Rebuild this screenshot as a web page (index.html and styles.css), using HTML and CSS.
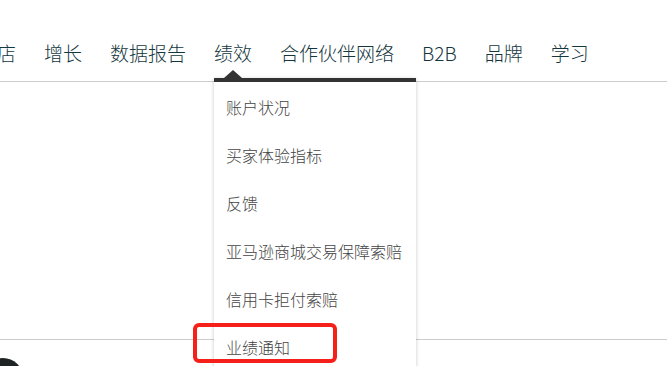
FILE: index.html
```html
<!DOCTYPE html>
<html lang="zh-CN">
<head>
<meta charset="utf-8">
<link rel="stylesheet" href="styles.css">
</head>
<body>
<div class="page">
  <header class="nav">
    <ul class="nav-list">
      <li>店</li>
      <li>增长</li>
      <li>数据报告</li>
      <li class="active">绩效</li>
      <li>合作伙伴网络</li>
      <li>B2B</li>
      <li>品牌</li>
      <li>学习</li>
    </ul>
  </header>
  <section class="content"></section>
  <div class="footer-row"><span class="avatar"></span></div>

  <div class="dropdown">
    <span class="caret"></span>
    <ul class="menu">
      <li>账户状况</li>
      <li>买家体验指标</li>
      <li>反馈</li>
      <li>亚马逊商城交易保障索赔</li>
      <li>信用卡拒付索赔</li>
      <li>业绩通知</li>
    </ul>
  </div>
  <div class="highlight"></div>
</div>
</body>
</html>
```
FILE: styles.css
```css
html, body {
  margin: 0;
  padding: 0;
  background: #fff;
  overflow: hidden;
}
body {
  font-family: "Noto Sans CJK SC", "Noto Sans", sans-serif;
}
.page {
  position: relative;
  width: 667px;
  height: 366px;
  overflow: hidden;
}
.nav {
  height: 81px;
  border-bottom: 1px solid #cccccc;
  box-sizing: content-box;
}
.nav-list {
  list-style: none;
  margin: 0 0 0 -3px;
  padding: 39px 0 0 0;
  display: flex;
  gap: 28px;
  white-space: nowrap;
}
.nav-list li {
  font-size: 19px;
  line-height: 28px;
  font-weight: 300;
  color: #14363e;
}
.content {
  height: 257px;
  border-bottom: 1px solid #cccccc;
}
.footer-row {
  height: 26px;
  position: relative;
}
.avatar {
  position: absolute;
  left: -17px;
  top: 18px;
  width: 40px;
  height: 40px;
  border-radius: 50%;
  background: #1e2323;
}
.dropdown {
  position: absolute;
  left: 214px;
  top: 78px;
  width: 202px;
  height: 320px;
  background: #fff;
  border-top: 4px solid #333333;
  box-shadow: 0 1px 4px rgba(0, 0, 0, 0.22);
}
.caret {
  position: absolute;
  left: 10px;
  top: -12px;
  width: 0;
  height: 0;
  border-left: 9px solid transparent;
  border-right: 9px solid transparent;
  border-bottom: 8px solid #333333;
}
.menu {
  list-style: none;
  margin: 0;
  padding: 1px 0 0 0;
}
.menu li {
  height: 48px;
  line-height: 48px;
  padding-left: 12px;
  font-size: 16px;
  font-weight: 300;
  color: #444444;
  white-space: nowrap;
}
.highlight {
  position: absolute;
  left: 193px;
  top: 323px;
  width: 144px;
  height: 40px;
  box-sizing: border-box;
  border: 4px solid #f5201a;
  border-radius: 6px;
}
```
